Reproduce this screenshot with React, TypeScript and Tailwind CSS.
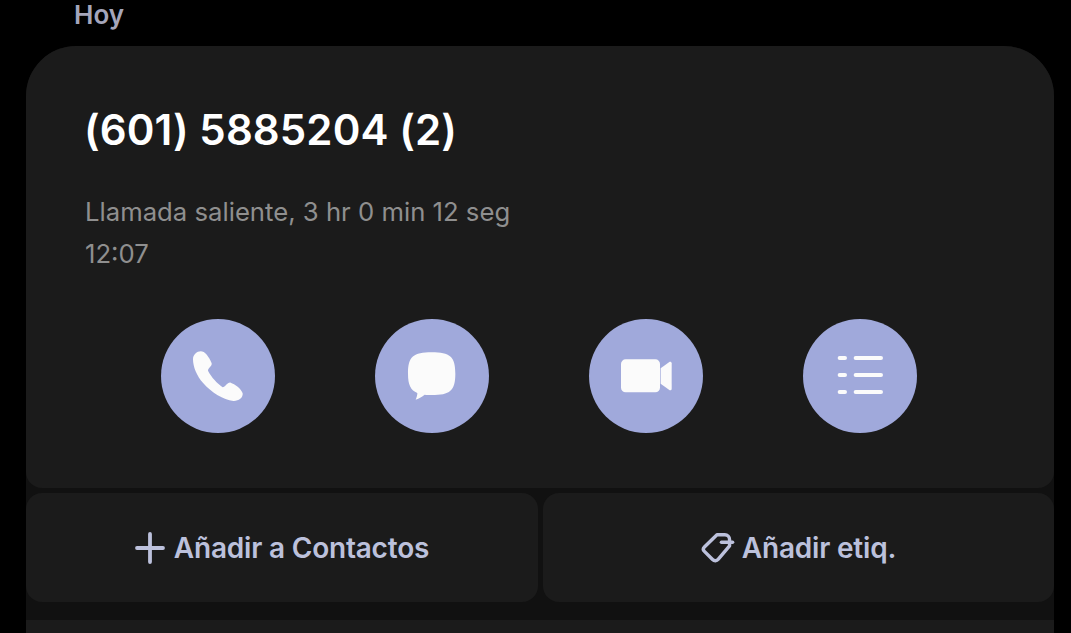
const font = "font-['Inter','Noto_Sans',sans-serif]";

function PhoneIcon() {
  return (
    <svg viewBox="63 57 342 342" className="size-full">
      <path
        fill="#fbfbfb"
        d="M159 178C159 160 178 149 191 156C199 160 211 178 215 190C217 198 204 204 204 212C214 232 232 250 248 262C256 262 262 246 272 248C284 252 304 266 308 280C310 294 294 304 280 303C250 300 215 278 190 250C170 228 159 200 159 178Z"
      />
    </svg>
  );
}

function ChatIcon() {
  return (
    <svg viewBox="705 57 342 342" className="size-full">
      <path
        fill="#fbfbfb"
        d="M875 157C930 157 946 170 946 221C946 272 930 285 875 285C866 285 860 285 854 284C846 290 838 295 827 299C830 292 832 286 832 279C812 270 804 255 804 221C804 170 820 157 875 157Z"
      />
    </svg>
  );
}

function VideoIcon() {
  return (
    <svg viewBox="57 57 342 342" className="size-full">
      <rect x="153" y="178" width="117" height="99" rx="14" fill="#fbfbfb" />
      <path
        fill="#fbfbfb"
        d="M272 205L298 186C301 184 305 186 305 190V266C305 270 301 272 298 270L272 251Z"
      />
    </svg>
  );
}

function ListIcon() {
  return (
    <svg viewBox="699 57 342 342" className="size-full" stroke="#fbfbfb" strokeWidth="12" strokeLinecap="round">
      <path d="M809 174H825M857 174H933" />
      <path d="M809 225H825M857 225H933" />
      <path d="M809 276H825M857 276H933" />
    </svg>
  );
}

function PlusIcon() {
  return (
    <svg viewBox="0 0 30 32" className="h-8 w-[30px] shrink-0" stroke="#bcc1dc" strokeWidth="3.8" strokeLinecap="round">
      <path d="M15 2V30M2 16H28" />
    </svg>
  );
}

function TagIcon() {
  return (
    <svg viewBox="498 186 100 92" className="h-8 w-[34px] shrink-0" fill="none" stroke="#bcc1dc" strokeWidth="10" strokeLinecap="round" strokeLinejoin="round">
      <path d="M545 193L568 193C576 193 582 199 582 207V226L549 265C544 271 537 271 532 266L508 242C504 238 504 233 508 229Z" />
      <path d="M558 215H591" />
    </svg>
  );
}

function ActionCircle({ children }: { children: React.ReactNode }) {
  return <div className="size-[114px] rounded-full bg-[#a0a9db]">{children}</div>;
}

export default function App() {
  return (
    <div className={`h-[633px] overflow-hidden bg-black ${font}`}>
      <div className="h-[46px] pl-[74px] text-[26px] leading-[30px] font-semibold text-[#a5a6bb]">Hoy</div>
      <div className="mx-[26px] h-full w-[1028px] rounded-t-[50px] bg-[#111111]">
        <div className="h-[442px] rounded-t-[50px] rounded-b-[16px] bg-[#1b1b1b] pt-[56px] pl-[58px]">
          <h1 className="text-[42px] leading-[56px] font-semibold tracking-[0.1px] text-white">(601) 5885204 (2)</h1>
          <p className="mt-[33px] pl-px text-[25.7px] leading-[42px] text-[#8f8f8f]">
            Llamada saliente, 3 hr 0 min 12 seg
            <br />
            12:07
          </p>
          <div className="mt-[44px] flex gap-[100px] pl-[77px]">
            <ActionCircle><PhoneIcon /></ActionCircle>
            <ActionCircle><ChatIcon /></ActionCircle>
            <ActionCircle><VideoIcon /></ActionCircle>
            <ActionCircle><ListIcon /></ActionCircle>
          </div>
        </div>
        <div className="mt-[5px] flex gap-[5px]">
          <div className="flex h-[109px] w-[512px] items-center justify-center gap-[9px] rounded-[16px] bg-[#1b1b1b] text-[28px] font-semibold tracking-[-0.2px] text-[#bcc1dc]">
            <PlusIcon />
            Añadir a Contactos
          </div>
          <div className="flex h-[109px] w-[511px] items-center justify-center gap-[7px] rounded-[16px] bg-[#1b1b1b] text-[28px] font-semibold tracking-[-0.2px] text-[#bcc1dc]">
            <TagIcon />
            Añadir etiq.
          </div>
        </div>
        <div className="mt-[18px] h-[40px] bg-[#1b1b1b]" />
      </div>
    </div>
  );
}
